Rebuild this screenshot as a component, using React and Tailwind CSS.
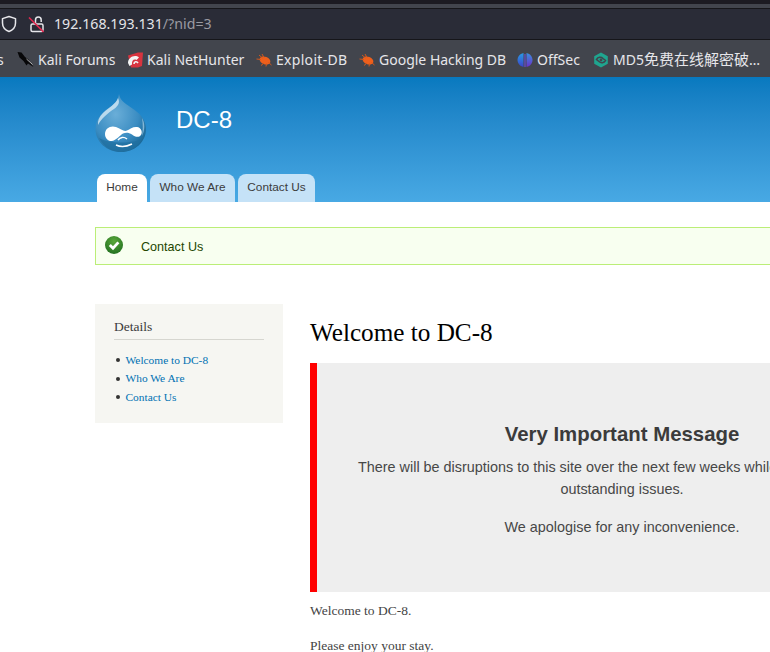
const chromeFont = "font-['Noto_Sans','Noto_Sans_CJK_SC',sans-serif]"

function ShieldIcon() {
  return (
    <svg viewBox="0 0 16 18" className="w-[16px] h-[18px]" fill="none">
      <path d="M8 1.5 L14.5 3.6 V8 C14.5 12.2 11.8 15 8 16.5 C4.2 15 1.5 12.2 1.5 8 V3.6 Z" stroke="#e6e6ea" strokeWidth="1.5" strokeLinejoin="round" />
    </svg>
  )
}

function LockIcon() {
  return (
    <svg viewBox="0 0 16 18" className="w-[16px] h-[18px]" fill="none">
      <rect x="3" y="9" width="12" height="7.5" rx="1.5" stroke="#e6e6ea" strokeWidth="1.5" />
      <path d="M7.5 9 V5 C7.5 3 8.7 2 10.3 2 C12 2 13.2 3 13.2 5 V7" stroke="#e6e6ea" strokeWidth="1.5" />
      <path d="M1 2.5 L15.5 17" stroke="#e22850" strokeWidth="1.6" />
    </svg>
  )
}

function ForumIcon() {
  return (
    <svg viewBox="0 0 17 17" className="w-[17px] h-[17px]" fill="none">
      <path d="M0.5 1 L4.5 1.5 L8 6 L11.5 8.5 L16.5 16 L11 12.5 L9.5 14.5 L6.5 10 L2.5 6.5 Z" fill="#070709" />
      <path d="M9.5 8 L15.5 13.5" stroke="#dcdcdc" strokeWidth="0.8" />
    </svg>
  )
}

function NetHunterIcon() {
  return (
    <svg viewBox="0 0 16 16" className="w-[16px] h-[16px]" fill="none">
      <path d="M1 3.5 L11 0.5 L16 0.5 L15 14 L11 15.5 L4 15.5 Z" fill="#d8343f" />
      <path d="M1 11 C1 5 8 2 12 5.5 L9.5 8 C7 6.5 4.5 8.5 5 12.5 L2.5 14 Z" fill="#f4f4f4" />
      <path d="M7 12 C7 9.5 9.8 9 11 11" stroke="#f4f4f4" strokeWidth="1.6" />
    </svg>
  )
}

function BugIcon() {
  return (
    <svg viewBox="0 0 16 14" className="w-[16px] h-[14px]" fill="none">
      <ellipse cx="9" cy="7.5" rx="5.6" ry="3.8" transform="rotate(22 9 7.5)" fill="#ee5f1c" />
      <path d="M0.5 6 L5 6.5 M3 2 L6.5 5 M6 1 L8 4.5 M5 12.5 L8 10 M10 13.5 L10.5 10.5 M15.5 12 L12.5 9.5" stroke="#d2591d" strokeWidth="1" />
    </svg>
  )
}

function OffSecIcon() {
  return (
    <svg viewBox="0 0 16 16" className="w-[16px] h-[16px]">
      <defs>
        <linearGradient id="off-l" x1="0" y1="0" x2="0" y2="1">
          <stop offset="0" stopColor="#2a9be8" />
          <stop offset="1" stopColor="#3a45c8" />
        </linearGradient>
        <linearGradient id="off-r" x1="0" y1="0" x2="0" y2="1">
          <stop offset="0" stopColor="#3a8fe0" />
          <stop offset="1" stopColor="#6a32c8" />
        </linearGradient>
      </defs>
      <path d="M6.5 1 C2.5 2 0.5 5 0.5 8 C0.5 11 2.5 14 6.5 15 Z" fill="url(#off-l)" />
      <path d="M9.5 1 C13.5 2 15.5 5 15.5 8 C15.5 11 13.5 14 9.5 15 Z" fill="url(#off-r)" />
      <rect x="7.4" y="2" width="1.2" height="13" fill="#6a4fd0" />
    </svg>
  )
}

function Md5Icon() {
  return (
    <svg viewBox="0 0 16 16" className="w-[16px] h-[16px]" fill="none">
      <path d="M8 0.5 L14.8 4.2 V11.8 L8 15.5 L1.2 11.8 V4.2 Z" fill="#1fa58f" />
      <path d="M3.5 7.5 C5 5 8 4.5 10 6.5 L12.5 8.5 C11 11 8 11.5 6 9.5 Z" stroke="#42454d" strokeWidth="1.5" />
      <circle cx="8" cy="8" r="1.4" fill="#42454d" />
    </svg>
  )
}

function DrupalLogo() {
  return (
    <svg viewBox="0 0 52 58" className="w-[52px] h-[58px]">
      <defs>
        <radialGradient id="drop" cx="0.4" cy="0.35" r="0.75">
          <stop offset="0" stopColor="#6aaed8" />
          <stop offset="0.6" stopColor="#3a8cc2" />
          <stop offset="1" stopColor="#15628f" />
        </radialGradient>
      </defs>
      <path d="M24 0 C25 6 29 9 36 13.5 C45 19 51 26 51 35 C51 48 40 58 26 58 C12 58 0.5 48 0.5 35 C0.5 24 9 17 16 12.5 C20 10 23 6 24 0 Z" fill="url(#drop)" />
      <path d="M4 44 C9 53 17 58 26 58 C35 58 43 53 48 44 C40 50 14 50 4 44 Z" fill="#1f6f9f" opacity="0.7" />
      <path d="M23 4 C21 10 13 14 8 19 C4 23 2.5 27 3 31 C6 25 13 19 19 15 C24 11.5 25 8 23 4 Z" fill="#d3e9f5" opacity="0.8" />
      <path d="M47 24 C50 29 50 36 47 42 C48 36 48 30 47 24 Z" fill="#bfe0f2" opacity="0.6" />
      <path d="M10 40 C10 34 16 31 21 33 C26 35 29 38 32 36.5 C35 35 38 32.5 42 33 C46 33.5 48 38 46 41 C44 44 40 43 37 40.5 C34 38.5 31 38 28 39.5 C25 41 22 46 17 47 C13 47.5 10 44 10 40 Z" fill="#ffffff" />
      <path d="M23 46 C25 43 29 42.5 32 45" fill="none" stroke="#ffffff" strokeWidth="1.4" />
      <path d="M21 51 C25 53 31 53 37 50" fill="none" stroke="#ffffff" strokeWidth="1.4" />
    </svg>
  )
}

function CheckIcon() {
  return (
    <svg viewBox="0 0 18 18" className="w-[18px] h-[18px] mb-[2px]">
      <defs>
        <radialGradient id="ok" cx="0.5" cy="0.3" r="0.75">
          <stop offset="0" stopColor="#5aa83a" />
          <stop offset="1" stopColor="#1f6e1f" />
        </radialGradient>
      </defs>
      <circle cx="9" cy="9" r="9" fill="url(#ok)" />
      <path d="M4.8 9 L8 12.2 L13.4 6.4" fill="none" stroke="#ffffff" strokeWidth="2.8" />
    </svg>
  )
}

function Bookmark({ icon, children, className }) {
  return (
    <div className={`flex items-center gap-[4px] shrink-0 ${className}`}>
      {icon}
      <span>{children}</span>
    </div>
  )
}

function Tab({ label, active, className }) {
  return (
    <div
      className={`h-[28px] rounded-t-[8px] flex items-center justify-center text-[11.8px] text-[#3b3b3b] ${
        active ? 'bg-white' : 'bg-[#c5e2f7]'
      } ${className}`}
    >
      {label}
    </div>
  )
}

function SideLink({ children }) {
  return (
    <li className="flex items-center h-[18.5px]">
      <span className="w-[4px] h-[4px] rounded-full bg-[#333] ml-[2px] mr-[5.5px]" />
      {children}
    </li>
  )
}

export default function App() {
  return (
    <div className="w-[770px] h-[652px] overflow-hidden bg-white">
      <div className="w-[1000px]">
        {/* browser chrome */}
        <div className={`w-[770px] ${chromeFont}`}>
          <div className="h-[4px] bg-[#1c1b22]" />
          <div className="h-[4px] bg-[#42454d]" />
          <div className="h-[1px] bg-[#16161a]" />
          <div className="h-[30px] bg-[#2a2c37] flex items-center pl-[1px] text-[14.2px]">
            <ShieldIcon />
            <div className="ml-[11px]">
              <LockIcon />
            </div>
            <span className="ml-[10px] text-[#e4e4e8]">192.168.193.131</span>
            <span className="text-[#9a9aa2]">/?nid=3</span>
          </div>
          <div className="h-[1px] bg-[#16161a]" />
          <div className="h-[37px] pt-[2px] bg-[#42454d] flex items-center text-[14px] text-[#e6e6ea] whitespace-nowrap overflow-hidden">
            <span className="-ml-[3px] w-[20px]">s</span>
            <Bookmark icon={<ForumIcon />} className="w-[110px]">Kali Forums</Bookmark>
            <Bookmark icon={<NetHunterIcon />} className="w-[129px]">Kali NetHunter</Bookmark>
            <Bookmark icon={<BugIcon />} className="w-[103px] tracking-[0.3px]">Exploit-DB</Bookmark>
            <Bookmark icon={<BugIcon />} className="w-[158px]">Google Hacking DB</Bookmark>
            <Bookmark icon={<OffSecIcon />} className="w-[76px]">OffSec</Bookmark>
            <Bookmark icon={<Md5Icon />}>MD5<span className="text-[15px]">免费在线解密破</span>…</Bookmark>
          </div>
        </div>

        {/* site header */}
        <div className="w-[770px] h-[125px] bg-gradient-to-b from-[#0779bf] to-[#48a9e4] font-['Liberation_Sans',sans-serif] pl-[95px] flex flex-col">
          <div className="flex items-start pt-[17px] h-[97px]">
            <DrupalLogo />
            <span className="ml-[29px] mt-[12px] text-[24px] leading-[28px] text-white">DC-8</span>
          </div>
          <div className="flex gap-[3px] pl-[2px]">
            <Tab label="Home" active className="w-[50px]" />
            <Tab label="Who We Are" className="w-[85px]" />
            <Tab label="Contact Us" className="w-[77px]" />
          </div>
        </div>

        {/* status message */}
        <div className="ml-[95px] mt-[25px] w-[830px] h-[38px] border border-[#bbee77] bg-[#f8fff0] flex items-center pl-[9px] font-['Liberation_Sans',sans-serif] text-[12.6px] text-[#234600]">
          <CheckIcon />
          <span className="ml-[18px] mt-[2px]">Contact Us</span>
        </div>

        <div className="flex items-start ml-[95px] mt-[39px]">
          {/* sidebar */}
          <div className="w-[188px] h-[119px] bg-[#f6f6f2] pt-[14px] px-[19px] font-['Liberation_Serif',serif] shrink-0">
            <div className="text-[13.5px] leading-[17px] text-[#3b3b3b] pb-[4px] border-b border-[#d6d6d0]">Details</div>
            <ul className="mt-[11px] text-[11.4px] text-[#0071b3]">
              <SideLink>Welcome to DC-8</SideLink>
              <SideLink>Who We Are</SideLink>
              <SideLink>Contact Us</SideLink>
            </ul>
          </div>

          {/* main */}
          <div className="ml-[27px] w-[617px] font-['Liberation_Serif',serif]">
            <h1 className="mt-[13px] text-[25.2px] leading-[32px] text-black">Welcome to DC-8</h1>
            <div className="mt-[14px] h-[229px] border-l-[7px] border-[#ff0000] bg-[#eeeeee] flex flex-col items-center pt-[58px] font-['Liberation_Sans',sans-serif] text-[#474747]">
              <div className="text-[20.4px] leading-[26px] font-bold text-[#3b3b3b]">Very Important Message</div>
              <p className="mt-[9px] whitespace-nowrap text-center text-[14.4px] leading-[22px]">
                There will be disruptions to this site over the next few weeks while we handle some
                <br />
                outstanding issues.
              </p>
              <p className="mt-[16px] text-[14.4px] leading-[22px]">We apologise for any inconvenience.</p>
            </div>
            <p className="mt-[11px] text-[13.5px] leading-[16px] text-[#444]">Welcome to DC-8.</p>
            <p className="mt-[19px] text-[13.5px] leading-[16px] text-[#444]">Please enjoy your stay.</p>
          </div>
        </div>
      </div>
    </div>
  )
}
